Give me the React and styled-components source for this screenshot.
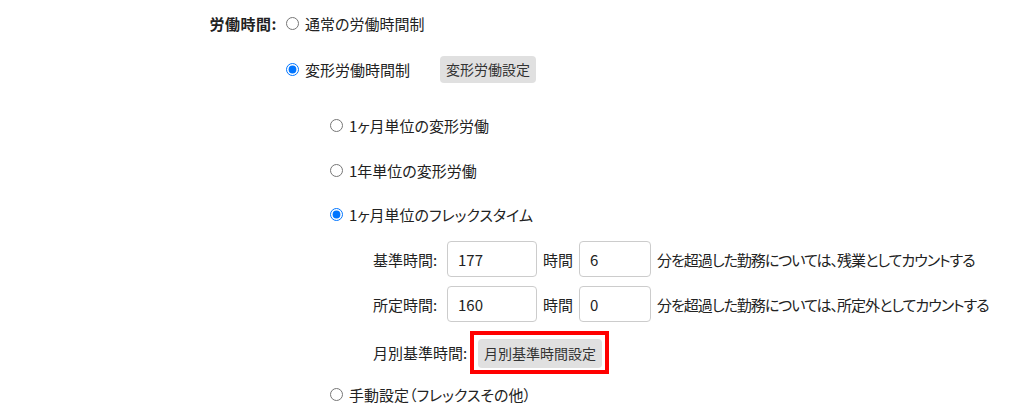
import React from "react";
import styled, { createGlobalStyle } from "styled-components";

const GlobalStyle = createGlobalStyle`
  body {
    margin: 0;
    background: #fff;
    color: #222;
    font-family: "Noto Sans CJK JP", "Noto Sans", sans-serif;
    font-size: 15px;
    font-feature-settings: "palt";
  }
`;

const Form = styled.div`
  display: grid;
  grid-template-columns: 286px 1fr;
  padding-top: 9px;
`;

const Label = styled.div`
  height: 28px;
  display: flex;
  align-items: center;
  justify-content: flex-end;
  padding-right: 9px;
  font-weight: bold;
  letter-spacing: 0.5px;
`;

const Column = styled.div`
  display: flex;
  flex-direction: column;
  padding-left: ${(p) => p.$indent || 0}px;
  margin-top: ${(p) => p.$mt || 0}px;
`;

const Row = styled.div`
  display: flex;
  align-items: center;
  height: ${(p) => p.$h || 28}px;
  margin-top: ${(p) => p.$mt || 0}px;
  gap: ${(p) => p.$gap || 0}px;
`;

const Radio = styled.input.attrs({ type: "radio" })`
  width: 13px;
  height: 13px;
  margin: 0 6px 0 0;
`;

const Option = styled.label`
  display: flex;
  align-items: center;
  white-space: nowrap;
`;

const GrayButton = styled.button`
  height: ${(p) => p.$h || 27}px;
  margin-left: ${(p) => p.$ml || 0}px;
  padding: 0 6px;
  border: none;
  border-radius: 4px;
  background: #e0e0e0;
  color: #333;
  font-family: inherit;
  font-size: 14px;
  font-feature-settings: normal;
`;

const Highlight = styled.span`
  display: flex;
  padding: 4px 3px 2px 4px;
  border: 4px solid #f00;
`;

const FieldLabel = styled.span`
  white-space: nowrap;
  min-width: ${(p) => p.$w || 0}px;
`;

const Text = styled.span`
  white-space: nowrap;
`;

const Note = styled.span`
  white-space: nowrap;
  letter-spacing: -1px;
`;

const NumberInput = styled.input`
  box-sizing: border-box;
  width: ${(p) => p.$w}px;
  height: 36px;
  padding: 0 10px;
  border: 1px solid #ccc;
  border-radius: 4px;
  font-family: inherit;
  font-size: 15px;
  color: #222;
`;

export default function App() {
  return (
    <>
      <GlobalStyle />
      <Form>
        <Label>労働時間:</Label>
        <Column>
          <Row>
            <Option>
              <Radio name="mode" />
              通常の労働時間制
            </Option>
          </Row>
          <Row $mt={18}>
            <Option>
              <Radio name="mode" defaultChecked />
              変形労働時間制
            </Option>
            <GrayButton $ml={30}>変形労働設定</GrayButton>
          </Row>

          <Column $indent={44} $mt={28}>
            <Row>
              <Option>
                <Radio name="flex" />
                1ヶ月単位の変形労働
              </Option>
            </Row>
            <Row $mt={17}>
              <Option>
                <Radio name="flex" />
                1年単位の変形労働
              </Option>
            </Row>
            <Row $mt={16}>
              <Option>
                <Radio name="flex" defaultChecked />
                1ヶ月単位のフレックスタイム
              </Option>
            </Row>

            <Column $indent={43}>
              <Row $h={36} $mt={13} $gap={6}>
                <FieldLabel $w={68}>基準時間:</FieldLabel>
                <NumberInput $w={90} defaultValue="177" />
                <Text>時間</Text>
                <NumberInput $w={72} defaultValue="6" />
                <Note>分を超過した勤務については、残業としてカウントする</Note>
              </Row>
              <Row $h={36} $mt={9} $gap={6}>
                <FieldLabel $w={68}>所定時間:</FieldLabel>
                <NumberInput $w={90} defaultValue="160" />
                <Text>時間</Text>
                <NumberInput $w={72} defaultValue="0" />
                <Note>分を超過した勤務については、所定外としてカウントする</Note>
              </Row>
              <Row $h={30} $mt={15} $gap={2}>
                <FieldLabel $w={95}>月別基準時間:</FieldLabel>
                <Highlight>
                  <GrayButton $h={29}>月別基準時間設定</GrayButton>
                </Highlight>
              </Row>
            </Column>

            <Row $mt={13}>
              <Option>
                <Radio name="flex" />
                手動設定（フレックスその他）
              </Option>
            </Row>
          </Column>
        </Column>
      </Form>
    </>
  );
}
